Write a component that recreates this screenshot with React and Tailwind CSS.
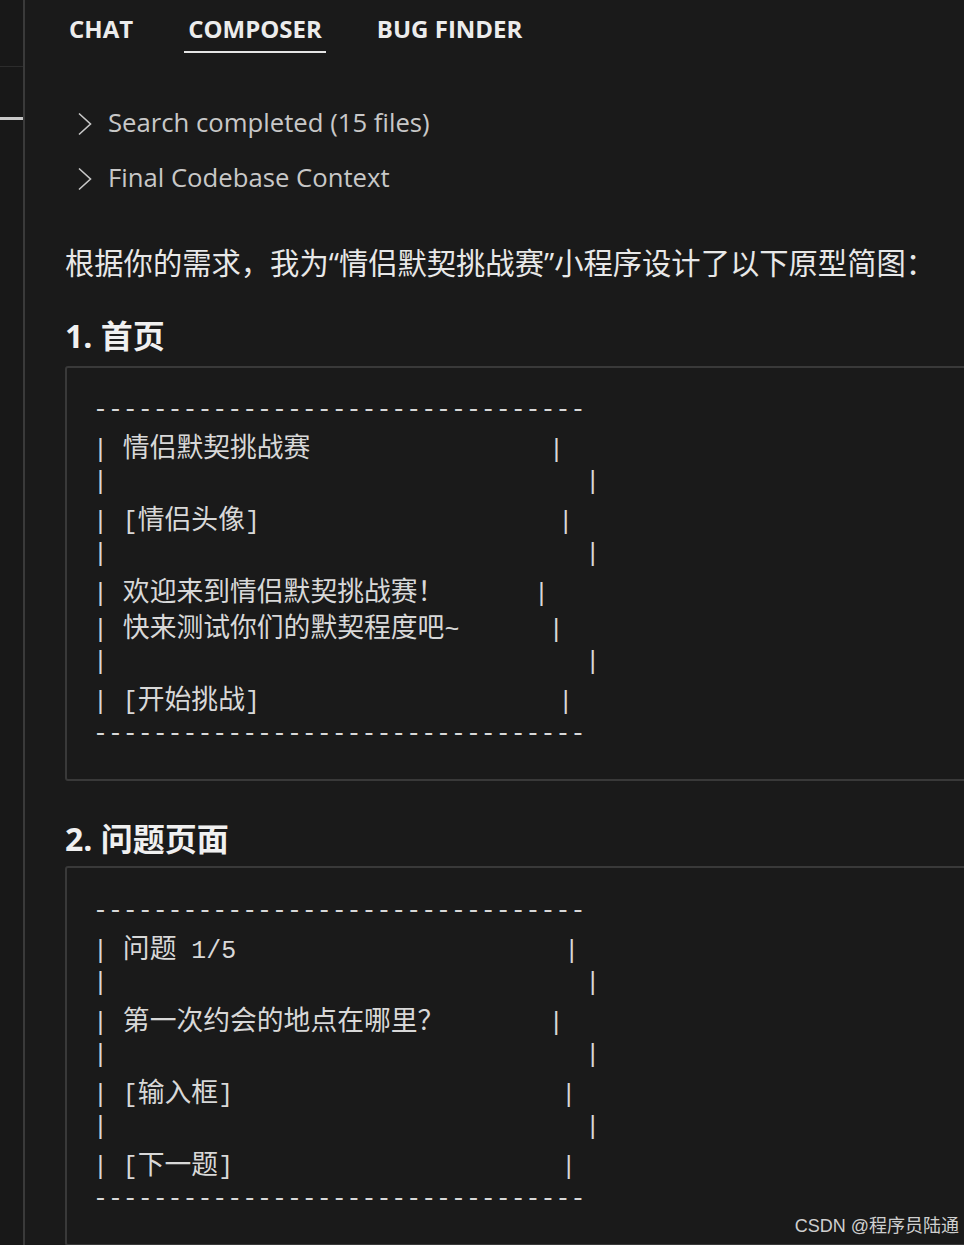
const homeRows = [
  "---------------------------------",
  "| 情侣默契挑战赛                |",
  "|                                |",
  "| [情侣头像]                    |",
  "|                                |",
  "| 欢迎来到情侣默契挑战赛！      |",
  "| 快来测试你们的默契程度吧~      |",
  "|                                |",
  "| [开始挑战]                    |",
  "---------------------------------",
]

const questionRows = [
  "---------------------------------",
  "| 问题 1/5                      |",
  "|                                |",
  "| 第一次约会的地点在哪里？       |",
  "|                                |",
  "| [输入框]                      |",
  "|                                |",
  "| [下一题]                      |",
  "---------------------------------",
]

// split a line into runs of wide (CJK) and narrow characters
const toRuns = (line) => {
  const runs = []
  for (const ch of line) {
    const wide = /[\u3000-\u9fff\uff00-\uffef]/.test(ch)
    const last = runs[runs.length - 1]
    if (last && last.wide === wide) last.text += ch
    else runs.push({ wide, text: ch })
  }
  return runs
}

const MonoLine = ({ text }) => (
  <div className="h-[36px] whitespace-pre">
    {toRuns(text).map((run, i) =>
      run.wide ? (
        <span key={i} className="text-[26.8px] font-['Noto_Sans_CJK_SC',sans-serif]">
          {run.text}
        </span>
      ) : (
        <span key={i}>{run.text}</span>
      ),
    )}
  </div>
)

const CodeBlock = ({ rows, className }) => (
  <div
    className={`w-[940px] rounded-[3px] border-2 border-[#393939] pl-[26px] pb-[27px] text-[24.87px] leading-[36px] text-[#d8d8d8] font-['Liberation_Mono','Noto_Sans_CJK_SC',monospace] ${className}`}
  >
    {rows.map((row, i) => (
      <MonoLine key={i} text={row} />
    ))}
  </div>
)

const Tab = ({ label, active }) => (
  <div
    className={`px-[4px] pt-[14px] pb-[7px] border-b-2 text-[24px] leading-[30px] font-bold text-[#ececec] ${
      active ? "border-[#e4e4e4]" : "border-transparent"
    }`}
  >
    {label}
  </div>
)

const Collapsible = ({ label }) => (
  <div className="flex items-center h-[55px] text-[#c8c8c8]">
    <svg width="16" height="24" viewBox="0 0 16 24" className="ml-[12px] mr-[15px]" fill="none">
      <polyline points="2,1.5 13.5,12 2,22.5" stroke="currentColor" strokeWidth="1.6" />
    </svg>
    <span className="text-[25.7px]">{label}</span>
  </div>
)

export default function App() {
  return (
    <div className="relative flex min-h-[1245px] h-[1245px] overflow-hidden bg-[#1a1a1a] font-['Open_Sans','Noto_Sans_CJK_SC',sans-serif]">
      {/* side strip */}
      <div className="w-[25px] shrink-0 bg-[#181818] border-r-2 border-[#3a3a3a]">
        <div className="mt-[66px] h-px bg-[#2c2c2c]" />
        <div className="mt-[50px] h-[3px] bg-[#c8c8c8]" />
      </div>

      <div className="flex-1 pl-[40px] overflow-hidden">
        <div className="flex gap-[47px]">
          <Tab label="CHAT" />
          <Tab label="COMPOSER" active />
          <Tab label="BUG FINDER" />
        </div>

        <div className="mt-[43px]">
          <Collapsible label="Search completed (15 files)" />
          <Collapsible label="Final Codebase Context" />
        </div>

        <p className="mt-[37px] text-[29.3px] leading-[40px] text-[#e8e8e8] whitespace-nowrap">
          根据你的需求，我为“情侣默契挑战赛”小程序设计了以下原型简图：
        </p>

        <h2 className="mt-[33px] text-[32px] leading-[40px] font-bold text-[#f0f0f0]">1. 首页</h2>
        <CodeBlock rows={homeRows} className="mt-[10px] pt-[24px]" />

        <h2 className="mt-[38px] text-[32px] leading-[40px] font-bold text-[#f0f0f0]">2. 问题页面</h2>
        <CodeBlock rows={questionRows} className="mt-[7px] pt-[25px]" />
      </div>

      <div className="absolute right-[5px] bottom-[5px] text-[18px] text-[#cfcfcf] font-['Liberation_Sans','Noto_Sans_CJK_SC',sans-serif]">
        CSDN @程序员陆通
      </div>
    </div>
  )
}
